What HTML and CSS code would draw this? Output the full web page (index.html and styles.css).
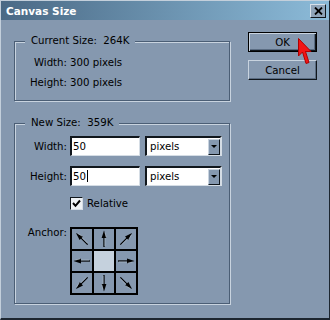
FILE: index.html
```html
<!DOCTYPE html>
<html lang="en">
<head>
  <meta charset="UTF-8">
  <title>Canvas Size</title>
  <link rel="stylesheet" href="styles.css">
</head>
<body>
  <svg class="defs" width="0" height="0">
    <defs>
      <g id="arrow">
        <line x1="10" y1="18" x2="10" y2="7" stroke="#000" stroke-width="1.3"/>
        <line x1="11" y1="17" x2="11" y2="9" stroke="#a9b7c6" stroke-width="0.7"/>
        <polygon points="10,1.5 7.6,9 12.4,9" fill="#000"/>
        <line x1="11" y1="3.5" x2="12.2" y2="8.5" stroke="#b8c4d0" stroke-width="0.6"/>
      </g>
    </defs>
  </svg>

  <div class="window">
    <div class="titlebar">
      <span class="title">Canvas Size</span>
      <span class="close">
        <svg width="9" height="8" viewBox="0 0 9 8">
          <path d="M1 0.5 L8 7.5 M8 0.5 L1 7.5" stroke="#000" stroke-width="1.8"/>
        </svg>
      </span>
    </div>

    <div class="body">
      <div class="groups">
        <div class="group">
          <div class="group-title">Current Size:&nbsp; 264K</div>
          <div class="rows current">
            <span class="label">Width:</span><span>300 pixels</span>
            <span class="label">Height:</span><span>300 pixels</span>
          </div>
        </div>

        <div class="group new">
          <div class="group-title">New Size:&nbsp; 359K</div>
          <div class="rows newrows">
            <span class="label">Width:</span>
            <div class="inline">
              <div class="field">50</div>
              <div class="select"><span>pixels</span><span class="drop"><i class="tri"></i></span></div>
            </div>

            <span class="label">Height:</span>
            <div class="inline">
              <div class="field">50<span class="caret"></span></div>
              <div class="select"><span>pixels</span><span class="drop"><i class="tri"></i></span></div>
            </div>

            <span></span>
            <div class="relative">
              <span class="check">
                <svg width="9" height="9" viewBox="0 0 9 9">
                  <path d="M1 4 L3.5 6.8 L8 1.5" fill="none" stroke="#000" stroke-width="2"/>
                </svg>
              </span>
              <span>Relative</span>
            </div>

            <span class="label anchor-label">Anchor:</span>
            <div class="anchor">
              <div class="cell"><svg viewBox="0 0 20 20"><use href="#arrow" transform="rotate(-45 10 10)"/></svg></div>
              <div class="cell"><svg viewBox="0 0 20 20"><use href="#arrow"/></svg></div>
              <div class="cell"><svg viewBox="0 0 20 20"><use href="#arrow" transform="rotate(45 10 10)"/></svg></div>
              <div class="cell"><svg viewBox="0 0 20 20"><use href="#arrow" transform="rotate(-90 10 10)"/></svg></div>
              <div class="cell center"></div>
              <div class="cell"><svg viewBox="0 0 20 20"><use href="#arrow" transform="rotate(90 10 10)"/></svg></div>
              <div class="cell"><svg viewBox="0 0 20 20"><use href="#arrow" transform="rotate(-135 10 10)"/></svg></div>
              <div class="cell"><svg viewBox="0 0 20 20"><use href="#arrow" transform="rotate(180 10 10)"/></svg></div>
              <div class="cell"><svg viewBox="0 0 20 20"><use href="#arrow" transform="rotate(135 10 10)"/></svg></div>
            </div>
          </div>
        </div>
      </div>

      <div class="buttons">
        <div class="btn default">OK</div>
        <div class="btn">Cancel</div>
      </div>
    </div>

    <!-- mouse pointer over the OK button -->
    <svg class="cursor" width="15" height="28" viewBox="0 0 15 28">
      <polygon points="0.5,0.5 0.5,18 4.5,14 8,25.5 11,24.5 7.5,13.5 13,13.5" fill="#f21414" stroke="#b00000" stroke-width="1"/>
    </svg>
  </div>
</body>
</html>
```

FILE: styles.css
```css
/* Canvas Size dialog */
body {
  margin: 0;
  font-family: "DejaVu Sans", sans-serif;
  font-size: 10.2px;
  color: #000;
}

.defs {
  position: absolute;
}

.window {
  position: relative;
  width: 330px;
  height: 320px;
  box-sizing: border-box;
  background-color: #8598af;
  border-top: 1px solid #c3cfdb;
  border-left: 1px solid #c3cfdb;
  border-right: 1px solid #1d2630;
  border-bottom: 2px solid #1d2630;
  overflow: hidden;
}

.titlebar {
  height: 19px;
  display: flex;
  align-items: center;
  justify-content: space-between;
  padding: 0 3px 0 5px;
  background: linear-gradient(to right, #4a6985, #8cbbd9);
}

.title {
  color: #fff;
  font-weight: bold;
  font-size: 10.5px;
}

.close {
  width: 16px;
  height: 14px;
  box-sizing: border-box;
  display: flex;
  align-items: center;
  justify-content: center;
  background-color: #8fa4b9;
  border: 1px solid;
  border-color: #d6e0ea #0e141a #0e141a #d6e0ea;
}

.body {
  display: flex;
  padding: 12px 0 0 13px;
}

.groups {
  width: 216px;
  padding-top: 9px;
}

.group {
  border: 1px solid #4b5e75;
  box-shadow: 1px 1px 0 #c8d3df, inset 1px 1px 0 #c8d3df;
}

.group-title {
  display: table;
  margin: -7px 0 0 10px;
  padding: 0 6px;
  line-height: 12px;
  background-color: #8598af;
}

.group.new {
  margin-top: 22px;
}

.rows {
  display: grid;
  grid-template-columns: 52px auto;
  column-gap: 3px;
  align-items: center;
}

.label {
  text-align: right;
}

.current {
  margin-top: 5px;
  padding-bottom: 8px;
  grid-auto-rows: 20px;
}

.newrows {
  margin-top: 7px;
  padding-bottom: 8px;
  row-gap: 10px;
}

.inline {
  display: flex;
  gap: 5px;
}

.field,
.select {
  height: 20px;
  box-sizing: border-box;
  background-color: #fff;
  border-style: solid;
  border-width: 2px 1px 1px 2px;
  border-color: #10161c #d5dde5 #d5dde5 #10161c;
}

.field {
  width: 70px;
  padding-left: 1px;
  line-height: 17px;
}

.caret {
  display: inline-block;
  width: 1px;
  height: 12px;
  margin-left: 1px;
  vertical-align: -2px;
  background-color: #000;
}

.select {
  width: 77px;
  display: flex;
  align-items: center;
  justify-content: space-between;
  padding-left: 3px;
  border-right-width: 2px;
}

.drop {
  width: 12px;
  height: 16px;
  box-sizing: border-box;
  display: flex;
  align-items: center;
  justify-content: center;
  background-color: #8598af;
  border: 1px solid;
  border-color: #c8d3df #0e141a #0e141a #c8d3df;
}

.tri {
  width: 0;
  height: 0;
  border-left: 3px solid transparent;
  border-right: 3px solid transparent;
  border-top: 3px solid #000;
}

.relative {
  display: flex;
  align-items: center;
  gap: 4px;
  height: 14px;
}

.check {
  width: 13px;
  height: 13px;
  box-sizing: border-box;
  display: flex;
  align-items: center;
  justify-content: center;
  background-color: #eef2f5;
  border: 1px solid;
  border-color: #10161c #d5dde5 #d5dde5 #10161c;
}

.anchor-label {
  align-self: start;
  margin-top: 7px;
  line-height: 12px;
}

.anchor {
  margin-top: 7px;
  width: 68px;
  display: grid;
  grid-template-columns: repeat(3, 20px);
  grid-template-rows: repeat(3, 20px);
  gap: 2px;
  padding: 2px;
  box-sizing: border-box;
  background-color: #000;
}

.cell {
  background-color: #8598af;
}

.cell svg {
  display: block;
  width: 20px;
  height: 20px;
}

.cell.center {
  background-color: #c5d1dd;
}

.buttons {
  margin-left: 18px;
  display: flex;
  flex-direction: column;
  gap: 8px;
}

.btn {
  width: 69px;
  height: 20px;
  box-sizing: border-box;
  display: flex;
  align-items: center;
  justify-content: center;
  border: 1px solid;
  border-color: #c8d3df #10161c #10161c #c8d3df;
  box-shadow: inset -1px -1px 0 #5a6c82;
}

.btn.default {
  border-color: #000;
  box-shadow: inset 1px 1px 0 #c8d3df, inset -1px -1px 0 #10161c, inset -2px -2px 0 #5a6c82;
}

.cursor {
  position: absolute;
  left: 297px;
  top: 37px;
}
```
